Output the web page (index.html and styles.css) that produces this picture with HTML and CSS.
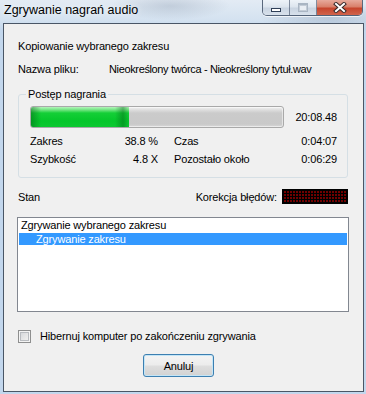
FILE: index.html
```html
<!DOCTYPE html>
<html lang="pl">
<head>
  <meta charset="UTF-8">
  <meta name="viewport" content="width=device-width, initial-scale=1.0">
  <title>Zgrywanie nagrań audio</title>
  <link rel="stylesheet" href="styles.css">
</head>
<body>
  <div class="window">
    <!-- Title bar -->
    <div class="titlebar">
      <span class="title">Zgrywanie nagrań audio</span>
      <div class="caption-buttons">
        <div class="cap-btn cap-min"><span class="glyph-min"></span></div>
        <div class="cap-btn cap-max"><span class="glyph-max"></span></div>
        <div class="cap-btn cap-close">
          <svg width="14" height="11" viewBox="0 0 14 11">
            <path d="M3 2 L11 9 M11 2 L3 9" stroke="#3a2a2a" stroke-width="4" stroke-linecap="square"/>
            <path d="M3 2 L11 9 M11 2 L3 9" stroke="#fff" stroke-width="2" stroke-linecap="square"/>
          </svg>
        </div>
      </div>
    </div>

    <!-- Dialog content -->
    <div class="client">
      <p class="caption">Kopiowanie wybranego zakresu</p>

      <div class="file-row">
        <span class="file-label">Nazwa pliku:</span>
        <span class="file-name">Nieokreślony twórca - Nieokreślony tytuł.wav</span>
      </div>

      <fieldset class="progress-group">
        <legend>Postęp nagrania</legend>
        <div class="progress-row">
          <div class="progress"><div class="progress-fill" style="width: 38.8%"></div></div>
          <span class="progress-time">20:08.48</span>
        </div>
        <div class="stats">
          <span>Zakres</span><span class="num">38.8 %</span>
          <span class="stat-label">Czas</span><span class="num">0:04:07</span>
          <span>Szybkość</span><span class="num">4.8 X</span>
          <span class="stat-label">Pozostało około</span><span class="num">0:06:29</span>
        </div>
      </fieldset>

      <div class="status-row">
        <span class="status-text">Stan</span>
        <span class="status-text ecc-label">Korekcja błędów:</span>
        <div class="ecc-meter"></div>
      </div>

      <ul class="status-list">
        <li>Zgrywanie wybranego zakresu</li>
        <li class="selected">Zgrywanie zakresu</li>
      </ul>

      <label class="hibernate">
        <span class="checkbox"></span>
        Hibernuj komputer po zakończeniu zgrywania
      </label>

      <div class="actions">
        <button class="btn">Anuluj</button>
      </div>
    </div>
  </div>
</body>
</html>
```

FILE: styles.css
```css
body {
  margin: 0;
  width: 366px;
  height: 394px;
  overflow: hidden;
  font-family: "Liberation Sans", Arial, sans-serif;
  font-size: 11px;
  letter-spacing: -0.15px;
  color: #000;
  background-color: #c6d9ee;
}

.window {
  height: 394px;
  display: flex;
  flex-direction: column;
  background:
    radial-gradient(ellipse 60px 14px at 170px 6px, rgba(140, 155, 175, 0.35), transparent),
    radial-gradient(ellipse 70px 16px at 330px 18px, rgba(130, 150, 175, 0.35), transparent),
    linear-gradient(to bottom, #e3ebf4 0, #d4e2f0 20px, #c3d7ed 30px, #c3d7ed 100%);
}

/* Title bar */
.titlebar {
  height: 23px;
  display: flex;
  align-items: flex-start;
  flex-shrink: 0;
}

.title {
  padding: 3px 0 0 4px;
  font-size: 12.5px;
  line-height: 14px;
  letter-spacing: 0;
  text-shadow: 0 0 6px rgba(255, 255, 255, 0.9);
}

.caption-buttons {
  display: flex;
  height: 15px;
  margin: 0 3px 0 auto;
  border: 1px solid rgba(45, 60, 85, 0.75);
  border-top: none;
  border-radius: 0 0 5px 5px;
  overflow: hidden;
  box-shadow: 0 1px 0 rgba(255, 255, 255, 0.7);
}

.cap-btn {
  display: flex;
  justify-content: center;
  align-items: center;
}

.cap-min,
.cap-max {
  width: 26px;
  border-right: 1px solid rgba(60, 75, 100, 0.6);
  background: linear-gradient(to bottom, #eef3f8 0, #dde5ee 45%, #c9d4e1 55%, #d8e1eb 100%);
}

.cap-close {
  width: 45px;
  background: linear-gradient(to bottom, #e7aa9c 0, #d9806b 45%, #c6452d 55%, #d0644c 100%);
}

.glyph-min {
  width: 8px;
  height: 2px;
  margin-top: 4px;
  background-color: #fff;
  border: 1px solid #2f3f57;
}

.glyph-max {
  width: 8px;
  height: 6px;
  border: 1px solid #a9b5c3;
  border-top-width: 2px;
  background-color: #e9eef4;
  box-shadow: inset 0 0 0 1px #c3ccd7;
}

/* Client area */
.client {
  height: 369px;
  box-sizing: border-box;
  margin: 0 2px 2px 3px;
  padding: 0 15px 0 14px;
  border: 1px solid #4a5666;
  background-color: #f0f0f0;
}

.caption {
  margin: 16px 0 0;
  line-height: 13px;
}

.file-row {
  display: flex;
  margin-top: 10px;
  line-height: 13px;
}

.file-label {
  width: 91px;
}

.file-name {
  letter-spacing: -0.36px;
}

/* Progress group */
.progress-group {
  margin: 12px 0 0;
  padding: 5px 10px 9px 11px;
  border: 1px solid #d5dfe5;
  border-radius: 3px;
  min-width: 0;
}

.progress-group legend {
  margin-left: -4px;
  padding: 0 2px;
  line-height: 13px;
}

.progress-row {
  display: flex;
  align-items: center;
}

.progress {
  width: 254px;
  height: 22px;
  box-sizing: border-box;
  border: 1px solid #a9a9a9;
  border-radius: 3px;
  overflow: hidden;
  background: linear-gradient(to bottom, #f2f2f2 0, #dedede 3px, #cbcbcb 6px, #c9c9c9 85%, #d8d8d8 100%);
  box-shadow: inset 0 0 0 1px rgba(255, 255, 255, 0.5);
}

.progress-fill {
  height: 100%;
  background:
    linear-gradient(to right, rgba(0, 90, 20, 0.45) 0, transparent 10px, transparent calc(100% - 14px), rgba(0, 90, 20, 0.4) calc(100% - 6px), transparent 100%),
    linear-gradient(to bottom, #b4f5bb 0, #6fe47f 3px, #14cf37 6px, #05c62b 70%, #0cc831 100%);
}

.progress-time {
  margin-left: auto;
  line-height: 13px;
}

.stats {
  display: grid;
  grid-template-columns: 90px 38px 126px 53px;
  margin-top: 4px;
  line-height: 18px;
}

.stats .num {
  text-align: right;
}

.stat-label {
  padding-left: 16px;
}

/* Status */
.status-row {
  display: flex;
  align-items: flex-start;
  height: 15px;
  margin-top: 11px;
}

.status-text {
  padding-top: 2px;
  line-height: 13px;
}

.ecc-label {
  margin-left: auto;
  margin-right: 5px;
}

.ecc-meter {
  width: 66px;
  height: 15px;
  box-sizing: border-box;
  border: 1px solid #000;
  background-color: #700000;
  background-image:
    repeating-linear-gradient(to right, #000 0 1px, transparent 1px 3px),
    repeating-linear-gradient(to bottom, #000 0 1px, transparent 1px 3px);
}

.status-list {
  list-style: none;
  height: 95px;
  box-sizing: border-box;
  margin: 13px -1px 0;
  padding: 0 1px;
  border: 1px solid #828790;
  background-color: #fff;
}

.status-list li {
  padding-left: 2px;
  line-height: 15px;
}

.status-list li.selected {
  padding-left: 17px;
  line-height: 12px;
  color: #fff;
  background-color: #3399ff;
}

/* Checkbox */
.hibernate {
  display: flex;
  align-items: center;
  margin-top: 18px;
  line-height: 13px;
}

.checkbox {
  width: 13px;
  height: 13px;
  box-sizing: border-box;
  margin-right: 9px;
  border: 1px solid #8e8f8f;
  background: linear-gradient(135deg, #cfd2d6 0, #e9e9e9 60%, #f6f6f6 100%);
  box-shadow: inset 0 0 0 1px #f4f4f4, inset 0 0 0 2px #b9bcc0;
}

/* Buttons */
.actions {
  margin-top: 11px;
  padding-left: 125px;
}

.btn {
  width: 71px;
  height: 23px;
  padding: 0;
  font-family: inherit;
  font-size: 11px;
  letter-spacing: inherit;
  color: #000;
  border: 1px solid #3c7fb1;
  border-radius: 3px;
  background: linear-gradient(to bottom, #f4f4f4 0, #ececec 48%, #dedede 52%, #d2d2d2 100%);
  box-shadow: inset 0 0 0 1px #c4e5f6;
}
```
